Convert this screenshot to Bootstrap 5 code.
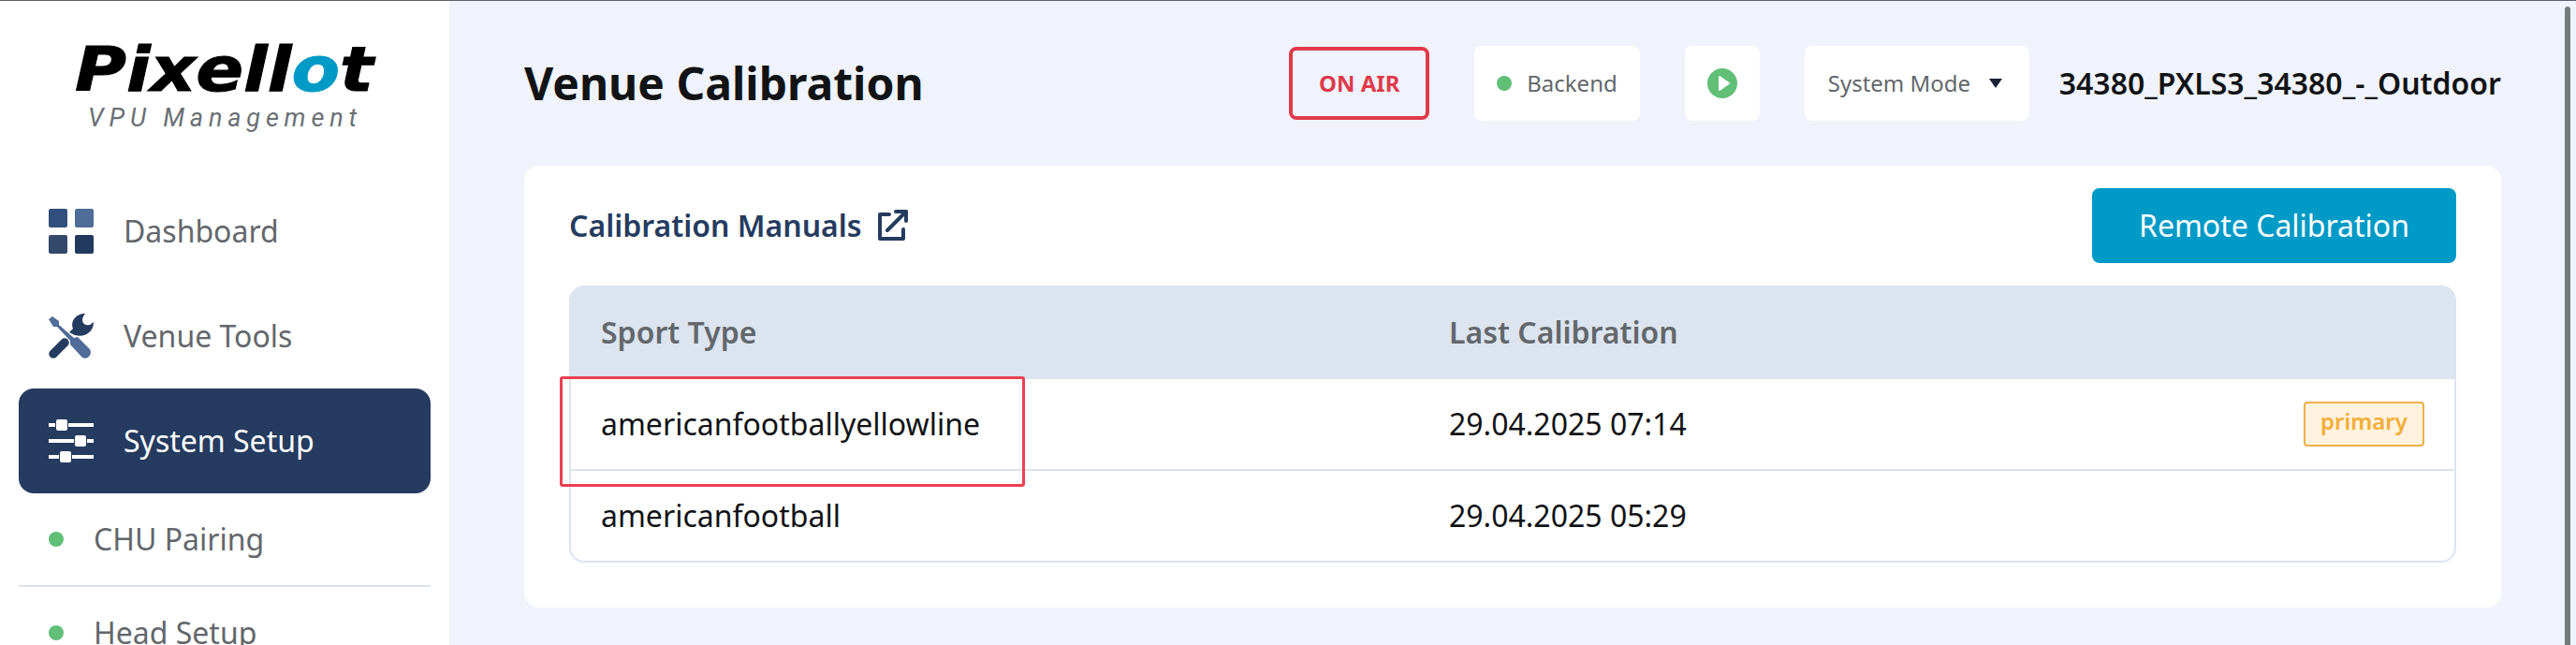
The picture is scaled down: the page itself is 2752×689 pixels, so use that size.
<!DOCTYPE html>
<html lang="en">
<head>
<meta charset="utf-8">
<title>Venue Calibration</title>
<link href="https://cdn.jsdelivr.net/npm/bootstrap@5.3.0/dist/css/bootstrap.min.css" rel="stylesheet">
<style>
html, body { height: 100%; overflow: hidden; }
body { font-family: "Noto Sans", sans-serif; font-size: 32px; line-height: 48px; color: #111315; background: #f0f3fb; }
.app-frame { height: 689px; border-top: 1px solid #5f6070; overflow: hidden; }
.side { width: 480px; background: #fff; padding: 0 20px; }
.brand { height: 190px; margin: 0 -20px; }
.side-link { height: 112px; padding: 0 32px; gap: 32px; color: #62676b; border-radius: 16px; }
.side-link.active { background: #253b5f; color: #fff; }
.side-sub { height: 100px; padding: 0 32px; gap: 32px; color: #62676b; border-bottom: 2px solid #dbe4ef; }
.dot { width: 16px; height: 16px; border-radius: 50%; background: #61bf78; flex: none; }
.main-col { padding: 48px 0 0 80px; }
.page-head, .panel { width: 2112px; }
.page-title { font-size: 48px; font-weight: 700; line-height: 80px; }
.tools { gap: 48px; }
.tile { height: 80px; background: #fff; border-radius: 8px; font-size: 24px; color: #62676b; }
.on-air { height: 78px; width: 150px; border: 4px solid #e03a4b; border-radius: 8px; color: #e03a4b; font-size: 24px; font-weight: 700; }
.sys { gap: 32px; }
.sys .tile { width: 240px; padding: 0 29px 0 25px; }
.panel { height: 472px; margin-top: 48px; background: #fff; border-radius: 16px; padding: 24px 48px; }
.manuals { color: #253b5f; font-weight: 600; }
.remote { width: 389px; height: 80px; background: #009ac7; color: #fff; border-radius: 8px; font-size: 32px; }
.grid-box { margin-top: 24px; border: 2px solid #dbe4ef; border-radius: 16px; }
.grid-row { height: 96px; padding: 0 32px; }
.grid-head { height: 98px; padding-bottom: 2px; background: #dbe4ef; font-weight: 600; color: #62676b; border-radius: 14px 14px 0 0; }
.grid-line { height: 98px; border-top: 2px solid #dbe4ef; }
.c1 { width: 906px; }
.tag { width: 129px; height: 48px; border: 2px solid #edb04a; border-radius: 4px; background: #fff2df; color: #f2ad36; font-size: 24px; font-weight: 600; line-height: 38px; }
.marker { left: -12px; top: 95px; width: 497px; height: 118px; border: 3px solid #ec3f52; border-radius: 3px; }
.scroll-thumb { width: 6px; background: #767b7f; margin: 6px 6px 0 0; border-radius: 3px 3px 0 0; }
</style>
</head>
<body>
<div class="app-frame d-flex">
  <nav class="side flex-shrink-0">
    <div class="brand">
      <svg width="480" height="190" viewBox="0 1 480 190" role="img" aria-label="Pixellot VPU Management">
        <text x="80" y="97" font-family="DejaVu Sans, sans-serif" font-weight="700" font-style="italic" font-size="65" stroke="#000" stroke-width="1" textLength="319" lengthAdjust="spacingAndGlyphs">Pixell<tspan fill="#009ac7" stroke="#009ac7">o</tspan>t</text>
        <text x="94" y="135" font-family="Roboto, sans-serif" font-style="italic" font-size="27" fill="#6a7075" textLength="287">VPU Management</text>
      </svg>
    </div>
    <a class="side-link d-flex align-items-center text-decoration-none" href="#">
      <svg width="48" height="48"><rect width="20" height="20" rx="2" fill="#314f7c"/><rect x="28" width="20" height="20" rx="2" fill="#506c98"/><rect y="28" width="20" height="20" rx="2" fill="#334969"/><rect x="28" y="28" width="20" height="20" rx="2" fill="#233a5f"/></svg>
      <span>Dashboard</span>
    </a>
    <a class="side-link d-flex align-items-center text-decoration-none" href="#">
      <svg width="48" height="48" viewBox="0 0 48 48"><path d="M5 43 17 31" stroke="#253b5f" stroke-width="9.500" stroke-linecap="round"/><path d="M39 0C29 0 23 8 26 16L22 20 28 23C38 26 48 20 48 9L44 12C37 14 33 7 39 0Z" fill="#253b5f"/><path d="M0 6 4 3 11 8 11 12 27 26 31 25 44 38C47 43 42 50 36 47L23 33 23 29 9 14 5 14Z" fill="#506c98"/></svg>
      <span>Venue Tools</span>
    </a>
    <a class="side-link active d-flex align-items-center text-decoration-none" href="#">
      <svg width="48" height="48" fill="#fff"><path d="M0 5h7v4H0zM21 5h27v4H21zM0 22h27v4H0zM41 22h7v4h-7zM0 39h11v4H0zM25 39h23v4H25z"/><rect x="8" y="1" width="12" height="12" rx="2"/><rect x="28" y="18" width="12" height="12" rx="2"/><rect x="12" y="35" width="12" height="12" rx="2"/></svg>
      <span>System Setup</span>
    </a>
    <a class="side-sub d-flex align-items-center text-decoration-none" href="#"><i class="dot"></i><span>CHU Pairing</span></a>
    <a class="side-sub d-flex align-items-center text-decoration-none" href="#"><i class="dot"></i><span>Head Setup</span></a>
  </nav>
  <main class="main-col flex-grow-1">
    <header class="page-head d-flex align-items-center justify-content-between">
      <h1 class="page-title mb-0">Venue Calibration</h1>
      <div class="tools d-flex align-items-center">
        <div class="on-air d-flex align-items-center justify-content-center">ON AIR</div>
        <div class="tile d-flex align-items-center px-4 gap-3"><i class="dot"></i>Backend</div>
        <div class="tile d-flex align-items-center px-4"><svg width="32" height="32"><circle cx="16" cy="16" r="16" fill="#61bf78"/><path d="M13 9 23 16 13 23Z" fill="#fff" stroke="#fff" stroke-width="2" stroke-linejoin="round"/></svg></div>
        <div class="sys d-flex align-items-center">
          <div class="tile d-flex align-items-center justify-content-between text-nowrap">System Mode<svg width="14" height="10"><path d="M0 0h14L7 10z" fill="#172136"/></svg></div>
          <strong class="fw-semibold text-nowrap">34380_PXLS3_34380_-_Outdoor</strong>
        </div>
      </div>
    </header>
    <section class="panel">
      <div class="d-flex align-items-center justify-content-between">
        <a class="manuals d-flex align-items-center gap-3 text-decoration-none" href="#">Calibration Manuals
          <svg width="34" height="34" fill="none" stroke="#253b5f" stroke-width="4" stroke-linecap="round" stroke-linejoin="round"><path d="M13 5H3V31H28V21M20 2H31V12M31 2 11 22"/></svg></a>
        <button class="btn remote border-0">Remote Calibration</button>
      </div>
      <div class="grid-box position-relative">
        <div class="grid-row grid-head d-flex align-items-center"><div class="c1">Sport Type</div><div>Last Calibration</div></div>
        <div class="grid-row d-flex align-items-center"><div class="c1">americanfootballyellowline</div><div>29.04.2025 07:14</div><span class="tag ms-auto text-center">primary</span></div>
        <div class="grid-row grid-line d-flex align-items-center"><div class="c1">americanfootball</div><div>29.04.2025 05:29</div></div>
        <div class="marker position-absolute"></div>
      </div>
    </section>
  </main>
  <div class="scroll-thumb flex-shrink-0"></div>
</div>
<script src="https://cdn.jsdelivr.net/npm/bootstrap@5.3.0/dist/js/bootstrap.bundle.min.js"></script>
</body>
</html>
